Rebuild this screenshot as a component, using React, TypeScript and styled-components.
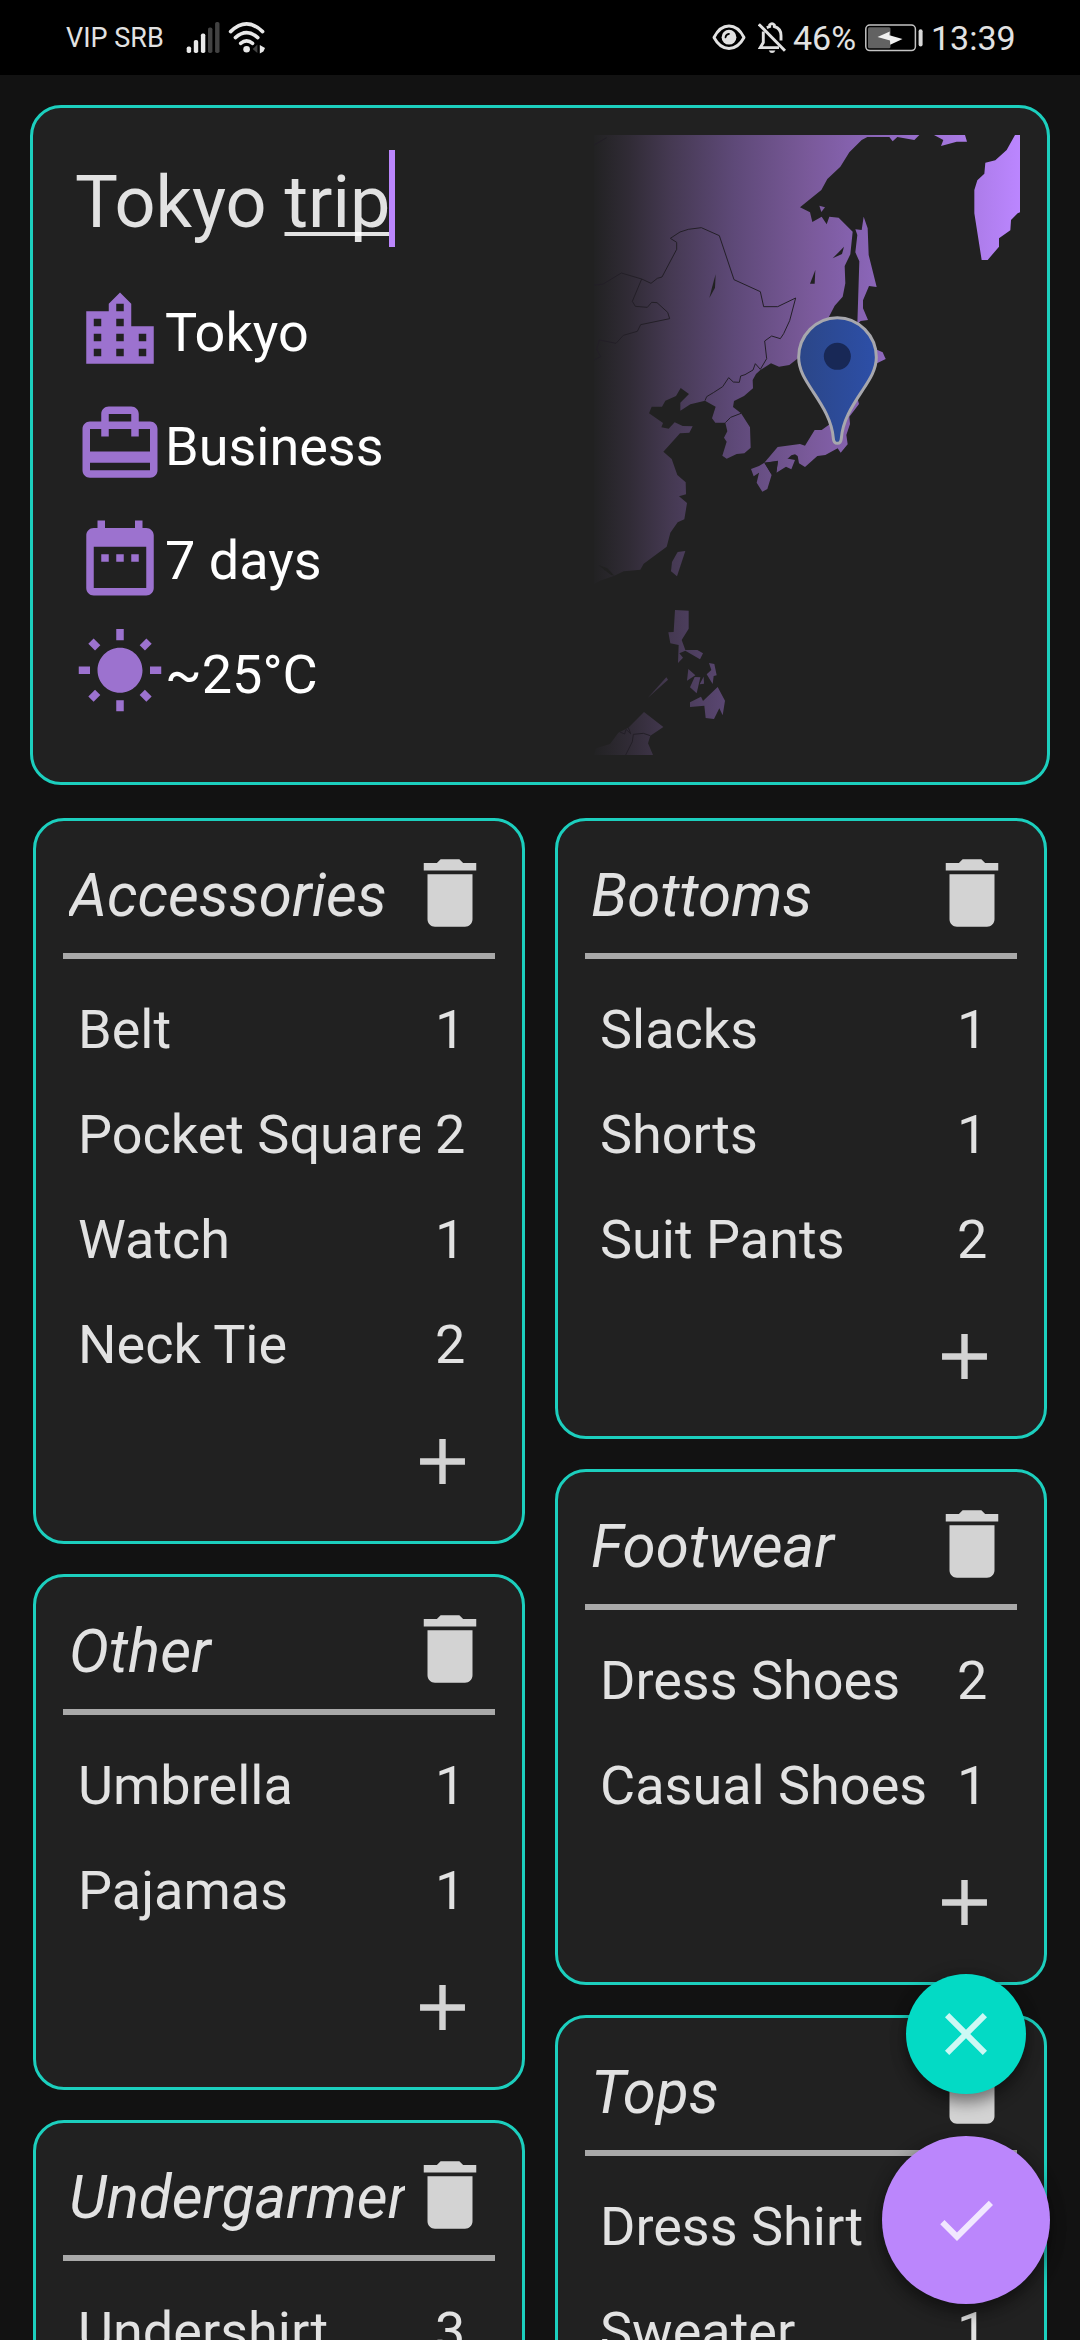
import React from "react";
import styled, { createGlobalStyle } from "styled-components";

const ACCENT = "#1ccfbe";
const PURPLE = "#bb86fc";
const SURFACE = "#212121";
const TEXT = "rgba(255, 255, 255, 0.87)";

const GlobalStyle = createGlobalStyle`
  *, *::before, *::after { box-sizing: border-box; }
  html, body { margin: 0; padding: 0; background: #121212; }
  body { font-family: Roboto, "Noto Sans", sans-serif; overflow: hidden; }
`;

const Screen = styled.div`
  position: relative;
  width: 1080px;
  height: 2340px;
  overflow: hidden;
  background: #121212;
`;

/* ---------- status bar ---------- */

const StatusBar = styled.header`
  display: flex;
  align-items: center;
  height: 75px;
  padding: 0 64px 0 66px;
  background: #000;
  color: #e2e2e2;
`;

const Carrier = styled.span`
  width: 120px;
  font-size: 27px;
  line-height: 32px;
  padding-top: 1px;
`;

const StatusIcons = styled.div`
  display: flex;
  gap: 8px;
`;

const StatusRight = styled.div`
  display: flex;
  align-items: center;
  margin-left: auto;
`;

const StatusText = styled.span<{ $width: number }>`
  width: ${(p) => p.$width}px;
  font-size: 34px;
  line-height: 40px;
  white-space: nowrap;
`;

const Spacer = styled.span<{ $width: number }>`
  width: ${(p) => p.$width}px;
`;

/* ---------- trip card ---------- */

const TripCard = styled.section`
  display: flex;
  width: 1020px;
  height: 680px;
  margin: 30px 0 0 30px;
  border: 3px solid ${ACCENT};
  border-radius: 31px;
  background: ${SURFACE};
`;

const TripInfo = styled.div`
  width: 561px;
  padding: 42px 0 0 42px;
`;

const TripTitle = styled.h1`
  display: flex;
  align-items: flex-start;
  height: 97px;
  margin: 0 0 38px;
  color: ${TEXT};
  font-size: 72px;
  font-weight: 400;
  line-height: 106px;
  white-space: pre;
`;

const Misspelled = styled.span`
  text-decoration: underline;
  text-decoration-thickness: 4px;
  text-underline-offset: 5px;
  text-decoration-skip-ink: none;
`;

const Caret = styled.span`
  width: 6px;
  height: 97px;
  margin-left: -1px;
  background: ${PURPLE};
`;

const FactList = styled.ul`
  display: flex;
  flex-direction: column;
  gap: 24px;
  margin: 0;
  padding: 0;
  list-style: none;
`;

const Fact = styled.li`
  display: flex;
  align-items: center;
  height: 90px;
  color: #fff;
  font-size: 54px;
  line-height: 64px;
`;

const FactLabel = styled.span`
  padding-top: 5px;
`;

const MapSvg = styled.svg`
  width: 426px;
  height: 620px;
  margin-top: 27px;
  flex: none;
`;

const IconSvg = styled.svg<{ $size: number; $color: string }>`
  display: block;
  flex: none;
  width: ${(p) => p.$size}px;
  height: ${(p) => p.$size}px;
  fill: ${(p) => p.$color};
`;

/* ---------- packing lists ---------- */

const Columns = styled.main`
  display: flex;
  gap: 30px;
  padding: 33px 33px 0;
`;

const Column = styled.div`
  display: flex;
  flex-direction: column;
  gap: 30px;
  width: 492px;
`;

const Card = styled.section`
  border: 3px solid ${ACCENT};
  border-radius: 31px;
  padding: 0 27px;
  background: ${SURFACE};
`;

const CardHeader = styled.div`
  display: flex;
  align-items: center;
  height: 138px;
  padding: 12px 0 0 6px;
  border-bottom: 6px solid #a9a9a9;
`;

const CardTitle = styled.h2`
  flex: 1;
  min-width: 0;
  margin: 0;
  padding-top: 5px;
  overflow: hidden;
  color: ${TEXT};
  font-size: 60px;
  font-style: italic;
  font-weight: 400;
  line-height: 72px;
  white-space: nowrap;
`;

const Items = styled.ul`
  margin: 0;
  padding: 18px 15px 0;
  list-style: none;
`;

const Item = styled.li`
  display: flex;
  height: 105px;
  color: ${TEXT};
  font-size: 54px;
  line-height: 105px;
`;

const ItemName = styled.span`
  width: 342px;
  overflow: hidden;
  white-space: nowrap;
`;

const ItemCount = styled.span`
  padding-left: 15px;
`;

const AddRow = styled.div`
  display: flex;
  justify-content: flex-end;
  height: 144px;
  padding: 26px 14px 0 0;
`;

/* ---------- floating buttons ---------- */

const FabStack = styled.div`
  position: absolute;
  right: 30px;
  bottom: 36px;
  display: flex;
  flex-direction: column;
  align-items: center;
  gap: 42px;
`;

const Fab = styled.button<{ $size: number; $color: string }>`
  display: grid;
  place-items: center;
  width: ${(p) => p.$size}px;
  height: ${(p) => p.$size}px;
  padding: 0;
  border: 0;
  border-radius: 50%;
  background: ${(p) => p.$color};
  box-shadow: 0 9px 15px rgba(0, 0, 0, 0.36), 0 2px 18px rgba(0, 0, 0, 0.2);
`;

/* ---------- icons ---------- */

const PATHS = {
  city: "M15 11V5l-3-3-3 3v2H3v14h18V11h-6zm-8 8H5v-2h2v2zm0-4H5v-2h2v2zm0-4H5V9h2v2zm6 8h-2v-2h2v2zm0-4h-2v-2h2v2zm0-4h-2V9h2v2zm0-4h-2V5h2v2zm6 12h-2v-2h2v2zm0-4h-2v-2h2v2z",
  travel:
    "M20 6h-3V4c0-1.11-.89-2-2-2H9c-1.11 0-2 .89-2 2v2H4c-1.11 0-2 .89-2 2v11c0 1.11.89 2 2 2h16c1.11 0 2-.89 2-2V8c0-1.11-.89-2-2-2zM9 4h6v2H9V4zm11 15H4v-2h16v2zm0-5H4V8h3v2h2V8h6v2h2V8h3v6z",
  dates:
    "M9 11H7v2h2v-2zm4 0h-2v2h2v-2zm4 0h-2v2h2v-2zm2-7h-1V2h-2v2H8V2H6v2H5c-1.11 0-1.99.9-1.99 2L3 20c0 1.1.89 2 2 2h14c1.1 0 2-.9 2-2V6c0-1.1-.9-2-2-2zm0 16H5V9h14v11z",
  sun: "M6.76 4.84l-1.8-1.79-1.41 1.41 1.79 1.79 1.42-1.41zM4 10.5H1v2h3v-2zm9-9.95h-2V3.5h2V.55zm7.45 3.91l-1.41-1.41-1.79 1.79 1.41 1.41 1.79-1.79zm-3.21 13.7l1.79 1.8 1.41-1.41-1.8-1.79-1.4 1.4zM20 10.5v2h3v-2h-3zm-8-5c-3.31 0-6 2.69-6 6s2.69 6 6 6 6-2.69 6-6-2.69-6-6-6zm-1 16.95h2V19.5h-2v2.95zm-7.45-3.91l1.41 1.41 1.79-1.8-1.41-1.41-1.79 1.8z",
  trash: "M6 19c0 1.1.9 2 2 2h8c1.1 0 2-.9 2-2V7H6v12zM19 4h-3.5l-1-1h-5l-1 1H5v2h14V4z",
  plus: "M19 13h-6v6h-2v-6H5v-2h6V5h2v6h6v2z",
  close:
    "M19 6.41L17.59 5 12 10.59 6.41 5 5 6.41 10.59 12 5 17.59 6.41 19 12 13.41 17.59 19 19 17.59 13.41 12z",
  check: "M9 16.17L4.83 12l-1.42 1.41L9 19 21 7l-1.41-1.41z",
};

type IconName = keyof typeof PATHS;

function Icon({ name, size, color }: { name: IconName; size: number; color: string }) {
  return (
    <IconSvg $size={size} $color={color} viewBox="0 0 24 24" aria-hidden>
      <path d={PATHS[name]} />
    </IconSvg>
  );
}

function SignalIcon() {
  const tops = [24.5, 18, 11.5, 5.5, 0];
  return (
    <svg width="34" height="32" viewBox="0 0 34 32">
      {tops.map((top, i) => (
        <rect
          key={i}
          x={0.7 + i * 7.1}
          y={top}
          width="4.4"
          height={31 - top}
          rx="1.8"
          fill={i < 3 ? "#e8e8e8" : "#424242"}
        />
      ))}
    </svg>
  );
}

function WifiIcon() {
  return (
    <svg width="38" height="32" viewBox="0 0 38 32" fill="none" stroke="#e8e8e8" strokeWidth="3.6" strokeLinecap="round">
      <path d="M2.6 9.6Q18.6 -5.8 34.6 9.6" />
      <path d="M7.4 15.6Q18.6 5.6 29.8 15.6" />
      <path d="M12.6 21.4Q18.6 16.2 24.6 21.4" />
      <circle cx="18.6" cy="27.3" r="3.3" fill="#e8e8e8" stroke="none" />
      <path d="M24.6 27L29.4 22.6V31Z" fill="#424242" stroke="none" />
      <path d="M31.8 23L37 26L35.4 29.4L31.8 31.4Z" fill="#e8e8e8" stroke="none" />
    </svg>
  );
}

function EyeIcon() {
  return (
    <svg width="34" height="30" viewBox="0 0 34 30">
      <path
        d="M2 14.5C6 6.5 11 3 17 3S28 6.5 32 14.5C28 22 23 25.5 17 25.5S6 22 2 14.5Z"
        fill="none"
        stroke="#e2e2e2"
        strokeWidth="2.9"
        strokeLinejoin="round"
      />
      <circle cx="17" cy="14.2" r="7.4" fill="#e2e2e2" />
      <path d="M13.500 14.500Q13.600 11.400 17 10.800" fill="none" stroke="#000" strokeWidth="1.7" strokeLinecap="round" />
    </svg>
  );
}

function BellOffIcon() {
  return (
    <svg width="28" height="32" viewBox="0 0 28 32" fill="none" stroke="#e2e2e2" strokeWidth="2.9">
      <path d="M5.3 9.5V20.500L2.200 25.600H21" />
      <path d="M8.800 5.600L11.700 4.500V3Q14 0.200 16.300 3V4.500Q23 6.500 23 13.500V18.500" />
      <path d="M0.800 2.200L27 28.800" strokeWidth="3" />
      <path d="M10.800 28.400H17.400Q16.500 31 14.100 31T10.800 28.400Z" fill="#e2e2e2" stroke="none" />
    </svg>
  );
}

function BatteryIcon() {
  return (
    <svg width="58" height="30" viewBox="0 0 58 30">
      <rect x="0.8" y="2" width="49.6" height="25.6" rx="4" fill="none" stroke="#c4c4c4" strokeWidth="1.5" />
      <rect x="3" y="4.3" width="22.5" height="21" rx="1.5" fill="#626262" />
      <rect x="53.6" y="6.2" width="4" height="17.3" rx="2" fill="#d8d8d8" />
      <path d="M12.500 14L24.800 8.500L24.400 12.300L37.500 16L25.200 21.700L25 17.400Z" fill="#f0f0f0" />
    </svg>
  );
}

/* ---------- map ---------- */

const LAND = [
  "42,45 1018,45 1003,60 952,51 938,64 928,51 862,51 845,60 808,97 781,140 742,177 724,210 660,262 690,277 697,306 725,290 740,313 748,290 776,293 818,335 811,403 794,438 796,490 788,530 764,557 747,590 700,690 652,716 628,735 597,740 573,730 541,750 528,762 518,780 519,805 492,828 462,843 459,861 483,880 510,922 512,983 493,1000 470,1002 440,1016 427,1007 440,965 432,953 442,934 436,908 406,908 396,895 407,860 375,842 331,853 301,872 301,848 327,822 302,804 288,828 256,842 246,860 215,860 207,880 249,909 244,922 266,926 284,907 308,918 338,919 328,938 300,940 250,995 275,1017 292,1065 317,1087 318,1123 297,1129 321,1149 313,1198 293,1207 271,1238 260,1280 191,1331 181,1349 131,1354 103,1367 60,1382 42,1392",
  "718,257 735,262 724,276",
  "1062,45 1090,60 1083,78 1130,65 1161,65 1155,45",
  "1305,45 1320,45 1320,277 1313,280 1293,300 1291,331 1257,355 1257,380 1223,420 1205,420 1183,280 1183,210 1192,181 1213,161 1216,128 1246,121 1280,90",
  "851,290 863,325 866,405 890,501 867,498 849,541 849,565 864,600 842,603 832,612 838,424 826,397 832,345 826,328 845,330",
  "880,685 908,697 917,717 880,735",
  "833,838 837,852 808,890 810,912 799,945 803,973 782,998 773,985 736,1005 712,1008 675,1041 657,1030 653,1008 645,1003 634,1006 618,1021 553,1028 593,981 660,972 675,977 704,930 725,930 750,912 770,880",
  "594,1021 625,1016 645,1020 634,1048 618,1040 589,1058",
  "513,1047 537,1038 553,1028 575,1064 562,1107 547,1115 530,1088 537,1058 521,1069",
  "293,1296 316,1293 291,1369 273,1354 276,1326",
  "285,1470 326,1472 326,1526 305,1560 316,1590 352,1590 369,1600 360,1618 316,1592 298,1600 309,1613 294,1629 296,1575 271,1570 265,1537 281,1536",
  "325,1647 346,1666 321,1682",
  "344,1671 361,1672 350,1720 330,1702",
  "371,1670 372,1691 359,1693",
  "387,1629 403,1632 410,1666 401,1668 398,1692 380,1663 394,1650",
  "413,1701 435,1742 428,1786 418,1765 402,1797 377,1794 373,1757 330,1761 330,1747 363,1730 369,1743",
  "259,1672 264,1679 203,1734",
  "192,1776 250,1821 211,1847 204,1870 219,1905 42,1905 48,1885 90,1872 115,1838 145,1823",
];

const WATER = [
  "792,380 786,402 758,415",
  "706,450 704,491 690,491",
  "407,463 405,503 388,534 398,495",
  "553,1028 594,1022 589,1058 575,1064",
  "55,1335 82,1345 103,1367 92,1364",
];

const BORDERS = [
  "42,495 68,493 124,459 185,477 213,490 232,475 246,471 290,388 290,367 271,355 300,336 325,328 364,323 418,347 462,479 541,515 551,560 593,560 647,534 629,602 611,641 601,656 575,648 554,663 560,716 541,748 526,731 519,750 495,764 482,768 478,787 460,786 446,773 428,800 400,818 380,830 375,842",
  "185,477 157,544 166,559 202,562 215,547 231,548 263,577 269,596 182,614 172,634 130,646 108,670 58,660 50,688 62,710 42,720",
  "436,908 452,892 483,880",
  "42,75 80,53",
  "137,1905 157,1865 160,1843 190,1840 211,1847",
  "145,1823 152,1841 138,1828 134,1842 120,1836",
];

function TripMap() {
  return (
    <MapSvg viewBox="42 45 1278 1860">
      <defs>
        <linearGradient id="fade" gradientUnits="userSpaceOnUse" x1="42" y1="0" x2="1320" y2="0">
          <stop offset="0" stopColor="#222223" />
          <stop offset="0.08" stopColor="#302b35" />
          <stop offset="0.18" stopColor="#453952" />
          <stop offset="0.33" stopColor="#5e4978" />
          <stop offset="0.5" stopColor="#795999" />
          <stop offset="0.65" stopColor="#8a65b7" />
          <stop offset="1" stopColor="#bb86ff" />
        </linearGradient>
        <linearGradient id="pin" gradientUnits="userSpaceOnUse" x1="652" y1="0" x2="892" y2="0">
          <stop offset="0" stopColor="#2b4687" />
          <stop offset="1" stopColor="#2d4fa8" />
        </linearGradient>
      </defs>
      <g fill="url(#fade)">
        {LAND.map((points) => (
          <polygon key={points} points={points} />
        ))}
      </g>
      <g fill={SURFACE}>
        {WATER.map((points) => (
          <polygon key={points} points={points} />
        ))}
      </g>
      <g fill="none" stroke="#231f27" strokeWidth="3" strokeLinejoin="round">
        {BORDERS.map((points) => (
          <polyline key={points} points={points} />
        ))}
      </g>
      <path
        d="M656 712C656 647 708 593 772 593S889 647 889 712C889 750 868 780 845 815C815 860 788 903 784 955Q783 970 772 970T760 955C756 903 729 860 699 815C676 780 656 750 656 712Z"
        fill="url(#pin)"
        stroke="#a7a7ad"
        strokeWidth="9"
      />
      <circle cx="772" cy="709" r="40.5" fill="#182856" />
    </MapSvg>
  );
}

/* ---------- data ---------- */

const FACTS: { icon: IconName; label: string }[] = [
  { icon: "city", label: "Tokyo" },
  { icon: "travel", label: "Business" },
  { icon: "dates", label: "7 days" },
  { icon: "sun", label: "~25°C" },
];

type PackingList = { title: string; items: [string, number][] };

const COLUMNS: PackingList[][] = [
  [
    { title: "Accessories", items: [["Belt", 1], ["Pocket Square", 2], ["Watch", 1], ["Neck Tie", 2]] },
    { title: "Other", items: [["Umbrella", 1], ["Pajamas", 1]] },
    { title: "Undergarments", items: [["Undershirt", 3]] },
  ],
  [
    { title: "Bottoms", items: [["Slacks", 1], ["Shorts", 1], ["Suit Pants", 2]] },
    { title: "Footwear", items: [["Dress Shoes", 2], ["Casual Shoes", 1]] },
    { title: "Tops", items: [["Dress Shirt", 2], ["Sweater", 1]] },
  ],
];

function PackingCard({ title, items }: PackingList) {
  return (
    <Card>
      <CardHeader>
        <CardTitle>{title}</CardTitle>
        <Icon name="trash" size={90} color="#d3d3d3" />
      </CardHeader>
      <Items>
        {items.map(([name, count]) => (
          <Item key={name}>
            <ItemName>{name}</ItemName>
            <ItemCount>{count}</ItemCount>
          </Item>
        ))}
      </Items>
      <AddRow>
        <Icon name="plus" size={77} color="#d3d3d3" />
      </AddRow>
    </Card>
  );
}

export default function App() {
  return (
    <Screen>
      <GlobalStyle />
      <StatusBar>
        <Carrier>VIP SRB</Carrier>
        <StatusIcons>
          <SignalIcon />
          <WifiIcon />
        </StatusIcons>
        <StatusRight>
          <EyeIcon />
          <Spacer $width={12} />
          <BellOffIcon />
          <Spacer $width={7} />
          <StatusText $width={63}>46%</StatusText>
          <Spacer $width={9} />
          <BatteryIcon />
          <Spacer $width={8} />
          <StatusText $width={85}>13:39</StatusText>
        </StatusRight>
      </StatusBar>

      <TripCard>
        <TripInfo>
          <TripTitle>
            <span>
              Tokyo <Misspelled>trip</Misspelled>
            </span>
            <Caret />
          </TripTitle>
          <FactList>
            {FACTS.map((fact) => (
              <Fact key={fact.label}>
                <Icon name={fact.icon} size={90} color="#9c72cf" />
                <FactLabel>{fact.label}</FactLabel>
              </Fact>
            ))}
          </FactList>
        </TripInfo>
        <TripMap />
      </TripCard>

      <Columns>
        {COLUMNS.map((lists, i) => (
          <Column key={i}>
            {lists.map((list) => (
              <PackingCard key={list.title} {...list} />
            ))}
          </Column>
        ))}
      </Columns>

      <FabStack>
        <Fab $size={120} $color="#03dac5" aria-label="Discard">
          <Icon name="close" size={72} color="rgba(255, 255, 255, 0.8)" />
        </Fab>
        <Fab $size={168} $color={PURPLE} aria-label="Save">
          <Icon name="check" size={72} color="rgba(255, 255, 255, 0.8)" />
        </Fab>
      </FabStack>
    </Screen>
  );
}
